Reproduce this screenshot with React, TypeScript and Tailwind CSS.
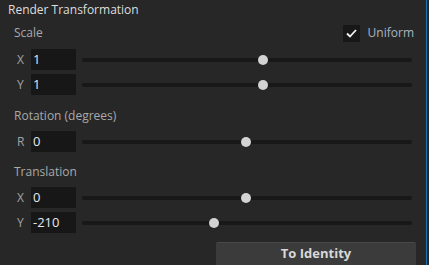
const font = { fontFamily: '"Open Sans", "Noto Sans", sans-serif' };

type Row = { label: string; value: string; thumb: number };

const scaleRows: Row[] = [
  { label: 'X', value: '1', thumb: 181 },
  { label: 'Y', value: '1', thumb: 181 },
];
const rotationRows: Row[] = [{ label: 'R', value: '0', thumb: 164 }];
const translationRows: Row[] = [
  { label: 'X', value: '0', thumb: 164 },
  { label: 'Y', value: '-210', thumb: 132 },
];

function Slider({ thumb }: { thumb: number }) {
  return (
    <div className="relative ml-[6px] flex h-[21px] w-[330px] items-center">
      <div className="h-[4px] w-full rounded-full bg-[#181818]" />
      <div
        className="absolute top-1/2 h-[10px] w-[10px] -translate-x-1/2 -translate-y-1/2 rounded-full bg-[#d3d3d3]"
        style={{ left: thumb }}
      />
    </div>
  );
}

function FieldRow({ row }: { row: Row }) {
  return (
    <div className="flex h-[21px] items-center">
      <span className="w-[15px] pl-[1px] text-[12px] text-[#a3a3a3]">{row.label}</span>
      <div className="flex h-[21px] w-[45px] items-center bg-[#171717] pl-[2px] text-[13px] text-[#e4e8ee]">
        {row.value}
      </div>
      <Slider thumb={row.thumb} />
    </div>
  );
}

function Section({ title, rows, gapTop }: { title: string; rows: Row[]; gapTop: string }) {
  return (
    <div className={gapTop}>
      <div className="-ml-[2px] flex h-[18px] items-center text-[12px] text-[#a9a9a9]">{title}</div>
      <div className="mt-[6px] flex flex-col gap-[4px]">
        {rows.map((r, i) => (
          <FieldRow key={i} row={r} />
        ))}
      </div>
    </div>
  );
}

export default function App() {
  return (
    <div className="flex h-[265px] w-[429px] overflow-hidden bg-[#272727]" style={font}>
      <div className="flex w-[426px] flex-col">
        {/* leftover edge of the panel above */}
        <div className="ml-[162px] h-px w-[128px] bg-[#303030]" />

        <div className="flex h-[18px] items-center pl-[8px] pt-px text-[12px] text-[#dedede]">
          Render Transformation
        </div>

        <div className="pl-[16px]">
          {/* Scale */}
          <div className="mt-[6px] flex h-[18px] items-center">
            <span className="-ml-[2px] text-[12px] text-[#a9a9a9]">Scale</span>
            <div className="ml-auto mr-[12px] flex items-center">
              <div className="flex h-[17px] w-[17px] items-center justify-center bg-[#171717]">
                <svg width="11" height="9" viewBox="0 0 11 9" fill="none">
                  <path d="M1 4.5 L4 7.5 L10 1" stroke="#f2f2f2" strokeWidth="1.8" />
                </svg>
              </div>
              <span className="ml-[8px] text-[12px] text-[#a8b5c2]">Uniform</span>
            </div>
          </div>
          <div className="mt-[7px] flex flex-col gap-[4px]">
            {scaleRows.map((r, i) => (
              <FieldRow key={i} row={r} />
            ))}
          </div>

          <Section title="Rotation (degrees)" rows={rotationRows} gapTop="mt-[12px]" />
          <Section title="Translation" rows={translationRows} gapTop="mt-[11px]" />
        </div>

        <div className="mt-[9px] flex justify-end pr-[10px]">
          <button
            type="button"
            className="h-[24px] w-[200px] rounded-t-[2px] border-t border-[#484848] bg-[#3b3b3b] pb-[2px] text-[13px] font-bold text-[#d8d8d8]"
          >
            To Identity
          </button>
        </div>
      </div>
      <div className="w-px bg-[#1c74b8]" />
    </div>
  );
}
